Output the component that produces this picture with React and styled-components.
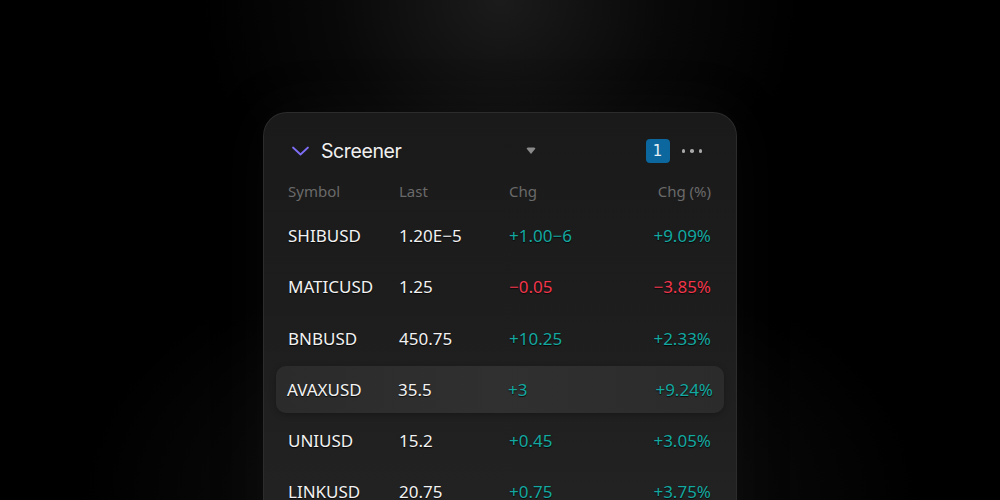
import React from "react";
import styled, { createGlobalStyle } from "styled-components";

const Global = createGlobalStyle`
  html, body { margin: 0; padding: 0; height: 100%; }
  body {
    background: #000;
    overflow: hidden;
    font-family: "Noto Sans", "Liberation Sans", sans-serif;
  }
  #root { height: 100%; }
`;

const Page = styled.div`
  height: 500px;
  width: 1000px;
  overflow: hidden;
  background:
    radial-gradient(ellipse 300px 280px at 500px 0px, rgba(32,32,32,0.85) 0%, rgba(14,14,14,0.6) 55%, rgba(0,0,0,0) 100%),
    radial-gradient(ellipse 420px 260px at 500px 500px, rgba(24,24,24,0.8) 0%, rgba(0,0,0,0) 100%),
    #000;
  display: flex;
  justify-content: center;
  padding-top: 112px;
  box-sizing: border-box;
`;

const Card = styled.div`
  width: 474px;
  height: 460px;
  box-sizing: border-box;
  border: 1px solid #2c2c2c;
  border-bottom: none;
  border-radius: 24px 24px 0 0;
  background: linear-gradient(180deg, #1a1a1a 0%, #1d1d1d 40%, #242424 100%);
  box-shadow: 0 0 60px rgba(60, 60, 60, 0.12);
  padding: 18px 0 0;
`;

const Header = styled.div`
  height: 40px;
  display: flex;
  align-items: center;
  padding: 0 34px 0 27px;
`;

const Title = styled.span`
  font-family: Inter, "Liberation Sans", sans-serif;
  font-size: 19.5px;
  letter-spacing: -0.4px;
  color: #f0f0f0;
  margin-left: 11px;
`;

const Caret = styled.span`
  margin-left: auto;
  margin-right: 110px;
  display: flex;
`;

const Badge = styled.span`
  width: 24px;
  height: 24px;
  border-radius: 4px;
  background: #0b679d;
  color: #e6f0f7;
  font-family: "DejaVu Sans", sans-serif;
  font-size: 15px;
  display: flex;
  align-items: center;
  justify-content: center;
  margin-right: 12px;
`;

const Dots = styled.span`
  display: flex;
  gap: 5px;
  span {
    width: 3.5px;
    height: 3.5px;
    border-radius: 50%;
    background: #a8a8a8;
  }
`;

const List = styled.div`
  padding: 5px 12px 0;
  display: flex;
  flex-direction: column;
  gap: 4.2px;
`;

const Cols = `
  display: grid;
  grid-template-columns: 111px 110px 1fr auto;
  align-items: center;
  padding: 0 13px 0 12px;
`;

const HeadRow = styled.div`
  ${Cols}
  height: 30px;
  margin-bottom: 2px;
  font-size: 15px;
  color: #6a6a6a;
`;

const Row = styled.div`
  ${Cols}
  height: 47px;
  border-radius: 10px;
  font-size: 17px;
  color: #f2f2f2;
  text-shadow: 0 1px 1px rgba(0, 0, 0, 0.8);
  background: ${(p) => (p.$active ? "linear-gradient(90deg, #2b2b2b, #303030 50%, #2b2b2b)" : "transparent")};
  ${(p) => (p.$active ? "box-shadow: 0 2px 6px rgba(0,0,0,0.25); padding: 0 11px 0 11px;" : "")}
`;

const Change = styled.span`
  color: ${(p) => (p.$neg ? "#f2364c" : "#14a8a0")};
  text-align: ${(p) => (p.$right ? "right" : "left")};
`;

const rows = [
  ["SHIBUSD", "1.20E−5", "+1.00−6", "+9.09%"],
  ["MATICUSD", "1.25", "−0.05", "−3.85%", true],
  ["BNBUSD", "450.75", "+10.25", "+2.33%"],
  ["AVAXUSD", "35.5", "+3", "+9.24%", false, true],
  ["UNIUSD", "15.2", "+0.45", "+3.05%"],
  ["LINKUSD", "20.75", "+0.75", "+3.75%"],
];

export default function App() {
  return (
    <>
      <Global />
      <Page>
        <Card>
          <Header>
            <svg width="19" height="12" viewBox="0 0 19 12">
              <path d="M2 2.5 L9.5 9.5 L17 2.5" fill="none" stroke="#7d6ef5" strokeWidth="1.8" strokeLinecap="round" strokeLinejoin="round" />
            </svg>
            <Title>Screener</Title>
            <Caret>
              <svg width="10" height="8" viewBox="0 0 10 8">
                <path d="M0.5 1.5 L1.8 0.5 L8.2 0.5 L9.5 1.5 L5 7 Z" fill="#8a8a8a" />
              </svg>
            </Caret>
            <Badge>1</Badge>
            <Dots>
              <span />
              <span />
              <span />
            </Dots>
          </Header>
          <List>
            <HeadRow>
              <span>Symbol</span>
              <span>Last</span>
              <span>Chg</span>
              <span>Chg (%)</span>
            </HeadRow>
            {rows.map(([s, l, c, p, neg, active]) => (
              <Row key={s} $active={active}>
                <span>{s}</span>
                <span>{l}</span>
                <Change $neg={neg}>{c}</Change>
                <Change $neg={neg} $right>{p}</Change>
              </Row>
            ))}
          </List>
        </Card>
      </Page>
    </>
  );
}
